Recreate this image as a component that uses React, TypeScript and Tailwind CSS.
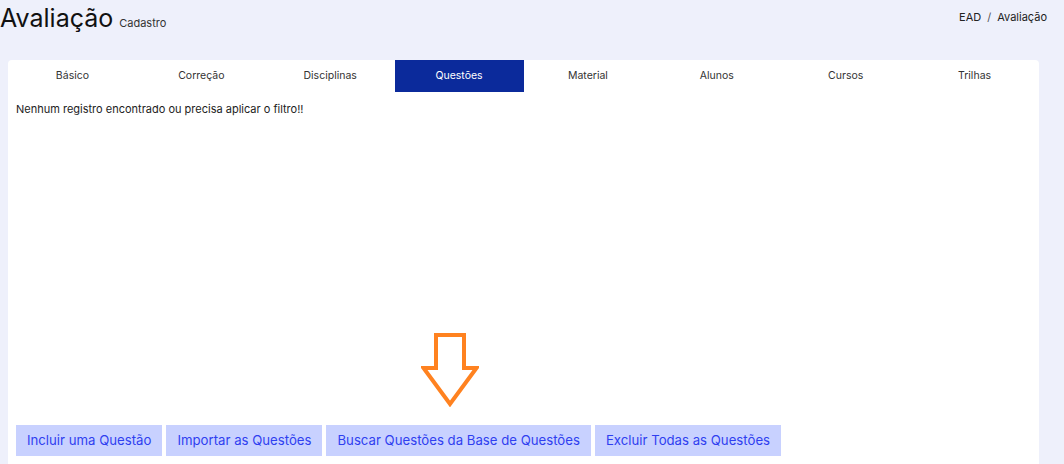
import React from "react";

const tabs = ["Básico", "Correção", "Disciplinas", "Questões", "Material", "Alunos", "Cursos", "Trilhas"];
const buttons = ["Incluir uma Questão", "Importar as Questões", "Buscar Questões da Base de Questões", "Excluir Todas as Questões"];

export default function App() {
  return (
    <div className="w-[1064px] h-[464px] overflow-hidden bg-[#eef0fb] text-[#212529]" style={{ fontFamily: "Inter, 'Noto Sans', sans-serif" }}>
      <div className="flex items-start justify-between h-[60px]">
        <div className="flex items-baseline gap-[6px] pt-[2px]">
          <span className="text-[25px] leading-[32px] text-[#111]">Avaliação</span>
          <span className="text-[11px] text-[#333]">Cadastro</span>
        </div>
        <div className="flex items-center gap-[6px] pt-[9px] pr-[17px] text-[11px] text-[#222]">
          <span>EAD</span>
          <span className="text-[#555]">/</span>
          <span>Avaliação</span>
        </div>
      </div>
      <div className="ml-[8px] w-[1031px] h-[404px] bg-white rounded-t-[4px] flex flex-col">
        <div className="grid grid-cols-8 h-[32px]">
          {tabs.map((t) => (
            <div
              key={t}
              className={
                t === "Questões"
                  ? "flex items-center justify-center bg-[#0b2a9b] text-white text-[10.5px]"
                  : "flex items-center justify-center text-[#333] text-[10.5px]"
              }
            >
              {t}
            </div>
          ))}
        </div>
        <div className="h-[33px] px-[8px] pt-[9px] text-[11px] text-[#222]">Nenhum registro encontrado ou precisa aplicar o filtro!!</div>
        <div className="flex-1 pl-[413px] pt-[208px]">
          <svg width="58" height="74" viewBox="0 0 58 74" className="block">
            <path d="M15 2 H43 V35 H55.5 L29 71 L2.5 35 H15 Z" fill="none" stroke="#ff8220" strokeWidth="4" strokeLinejoin="miter" />
          </svg>
        </div>
        <div className="flex gap-[4px] px-[8px] pb-[8px]">
          {buttons.map((b) => (
            <div key={b} className="h-[31px] px-[11px] flex items-center bg-[#c8d1ff] text-[#2f3ff0] text-[13.2px]">
              {b}
            </div>
          ))}
        </div>
      </div>
    </div>
  );
}
